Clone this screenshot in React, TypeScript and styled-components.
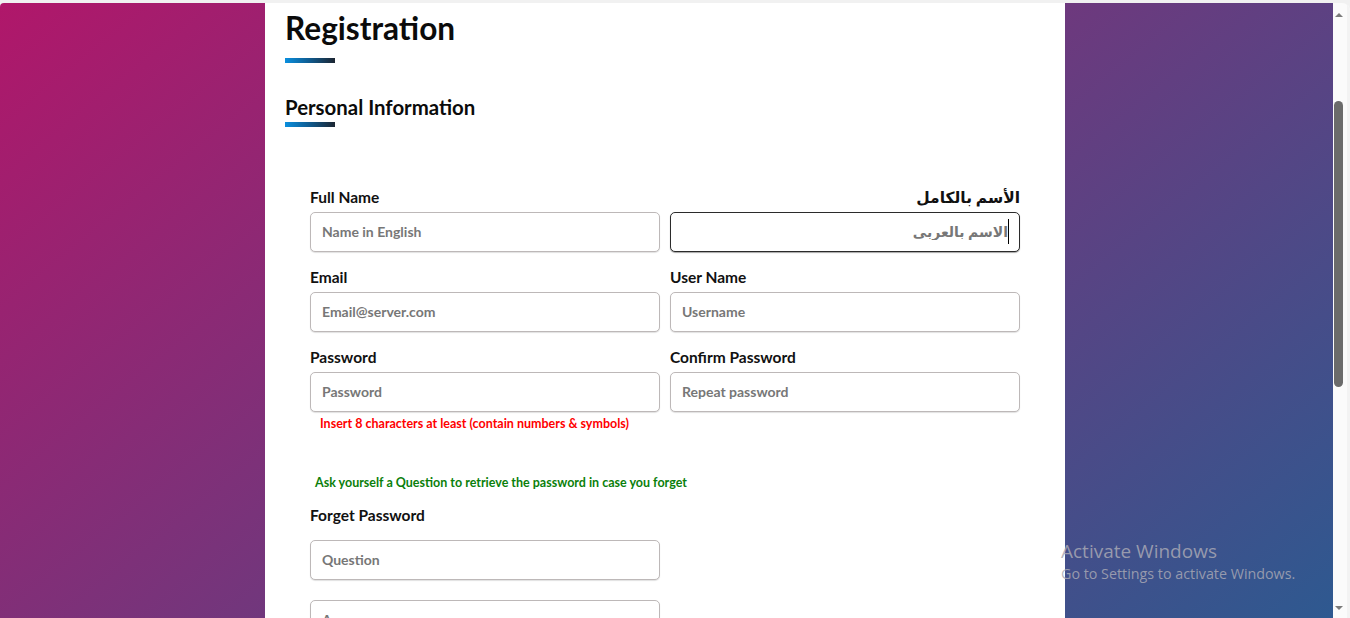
import React from "react";
import styled, { createGlobalStyle } from "styled-components";

const GlobalStyle = createGlobalStyle`
  html, body {
    margin: 0;
    padding: 0;
    height: 100%;
    overflow: hidden;
    background: #f1f1f1;
  }
  body {
    font-family: "Lato", "DejaVu Sans", sans-serif;
  }
  #root { height: 100%; }
  *, *::before, *::after { box-sizing: border-box; }
`;

const Frame = styled.div`
  position: relative;
  height: 618px;
  padding-top: 3px;
  background: #f1f1f1;
`;

const Window = styled.div`
  display: flex;
  height: 615px;
  border-radius: 4px 8px 0 0;
  overflow: hidden;
`;

const Viewport = styled.main`
  flex: 1;
  display: flex;
  padding-left: 265px;
  background: linear-gradient(141deg, #b0176a 0%, #2e5990 100%);
`;

const Card = styled.section`
  width: 800px;
  background: #ffffff;
  padding: 5px 20px 0;
  overflow: hidden;
`;

const Title = styled.h1`
  margin: 0;
  font-size: 31.6px;
  line-height: 40px;
  font-weight: 700;
  color: #0b0b0b;
`;

const Bar = styled.div<{ $gap: number }>`
  width: 50px;
  height: 5px;
  margin-top: ${(p) => p.$gap}px;
  background: linear-gradient(to right, #0a8fde 0%, #0f5f96 45%, #1c2531 100%);
`;

const SectionTitle = styled.h2`
  margin: 30px 0 0;
  font-size: 20.4px;
  line-height: 28px;
  font-weight: 700;
  color: #0b0b0b;
`;

const Form = styled.form`
  margin-top: 60px;
  padding: 0 25px;
  display: flex;
  flex-direction: column;
`;

const Grid = styled.div`
  display: grid;
  grid-template-columns: 350px 350px;
  column-gap: 10px;
  row-gap: 15px;
`;

const Field = styled.div<{ $rtl?: boolean }>`
  display: flex;
  flex-direction: column;
  gap: 5px;
  direction: ${(p) => (p.$rtl ? "rtl" : "ltr")};
`;

const Label = styled.label<{ $top?: number }>`
  display: block;
  font-size: 15.5px;
  line-height: 20px;
  font-weight: 700;
  color: #111111;
  margin-top: ${(p) => p.$top ?? 0}px;
`;

const InputWrap = styled.div`
  position: relative;
  width: 350px;
`;

const Input = styled.input<{ $focused?: boolean; $top?: number }>`
  display: block;
  width: 350px;
  height: 40px;
  margin-top: ${(p) => p.$top ?? 0}px;
  padding: 0 11px 1px;
  border: 1px solid ${(p) => (p.$focused ? "#2b2b2b" : "#bdb8b8")};
  border-radius: 5px;
  box-shadow: ${(p) =>
    p.$focused ? "0 1px 1px rgba(0,0,0,0.35)" : "0 1px 1px rgba(0,0,0,0.12)"};
  background: #ffffff;
  font-family: "Lato", "DejaVu Sans", sans-serif;
  font-size: 14px;
  font-weight: 700;
  color: #333333;
  outline: none;
  &::placeholder {
    color: #777777;
    opacity: 1;
  }
`;

const Caret = styled.span`
  position: absolute;
  right: 11px;
  top: 7px;
  width: 1px;
  height: 25px;
  background: #000000;
`;

const Hint = styled.p<{ $tone: "error" | "info"; $top: number; $indent: number }>`
  margin: ${(p) => p.$top}px 0 0;
  padding-left: ${(p) => p.$indent}px;
  font-size: 12.5px;
  line-height: 16px;
  font-weight: 700;
  color: ${(p) => (p.$tone === "error" ? "#ff0000" : "#0b7f0b")};
`;

const ScrollTrack = styled.div`
  width: 17px;
  display: flex;
  flex-direction: column;
  align-items: flex-start;
  background: #fbfbfb;
  box-shadow: inset -3px 0 0 #f3f3f3;
`;

const Arrow = styled.div<{ $dir: "up" | "down" }>`
  width: 0;
  height: 0;
  margin-left: 2px;
  border-left: 4px solid transparent;
  border-right: 4px solid transparent;
  ${(p) =>
    p.$dir === "up"
      ? "border-bottom: 4px solid #7b7b7b; margin-top: 10px;"
      : "border-top: 4px solid #7b7b7b; margin-bottom: 8px;"}
`;

const Thumb = styled.div`
  width: 9px;
  height: 286px;
  margin: 84px 0 0 1px;
  border-radius: 5px;
  background: #6b6b6b;
`;

const Spacer = styled.div`
  flex: 1;
`;

const Watermark = styled.div`
  position: absolute;
  left: 1061px;
  top: 539px;
  font-family: "Open Sans", "Noto Sans", sans-serif;
  color: rgba(168, 168, 180, 0.85);
  pointer-events: none;
`;

const WatermarkTitle = styled.div`
  font-size: 19px;
  line-height: 25px;
`;

const WatermarkText = styled.div`
  font-size: 14.3px;
  line-height: 20px;
`;

export default function App() {
  return (
    <Frame>
      <GlobalStyle />
      <Window>
        <Viewport>
          <Card>
            <Title>Registration</Title>
            <Bar $gap={10} />
            <SectionTitle>Personal Information</SectionTitle>
            <Bar $gap={1} />
            <Form onSubmit={(e) => e.preventDefault()}>
              <Grid>
                <Field>
                  <Label>Full Name</Label>
                  <Input placeholder="Name in English" />
                </Field>
                <Field $rtl>
                  <Label>الأسم بالكامل</Label>
                  <InputWrap>
                    <Input $focused dir="rtl" placeholder="الاسم بالعربى" />
                    <Caret />
                  </InputWrap>
                </Field>
                <Field>
                  <Label>Email</Label>
                  <Input placeholder="Email@server.com" />
                </Field>
                <Field>
                  <Label>User Name</Label>
                  <Input placeholder="Username" />
                </Field>
                <Field>
                  <Label>Password</Label>
                  <Input type="password" placeholder="Password" />
                </Field>
                <Field>
                  <Label>Confirm Password</Label>
                  <Input type="password" placeholder="Repeat password" />
                </Field>
              </Grid>
              <Hint $tone="error" $top={4} $indent={10}>
                Insert 8 characters at least (contain numbers &amp; symbols)
              </Hint>
              <Hint $tone="info" $top={43} $indent={5}>
                Ask yourself a Question to retrieve the password in case you forget
              </Hint>
              <Label $top={14}>Forget Password</Label>
              <Input $top={15} placeholder="Question" />
              <Input $top={20} placeholder="Answer" />
            </Form>
          </Card>
        </Viewport>
        <ScrollTrack>
          <Arrow $dir="up" />
          <Thumb />
          <Spacer />
          <Arrow $dir="down" />
        </ScrollTrack>
      </Window>
      <Watermark>
        <WatermarkTitle>Activate Windows</WatermarkTitle>
        <WatermarkText>Go to Settings to activate Windows.</WatermarkText>
      </Watermark>
    </Frame>
  );
}
